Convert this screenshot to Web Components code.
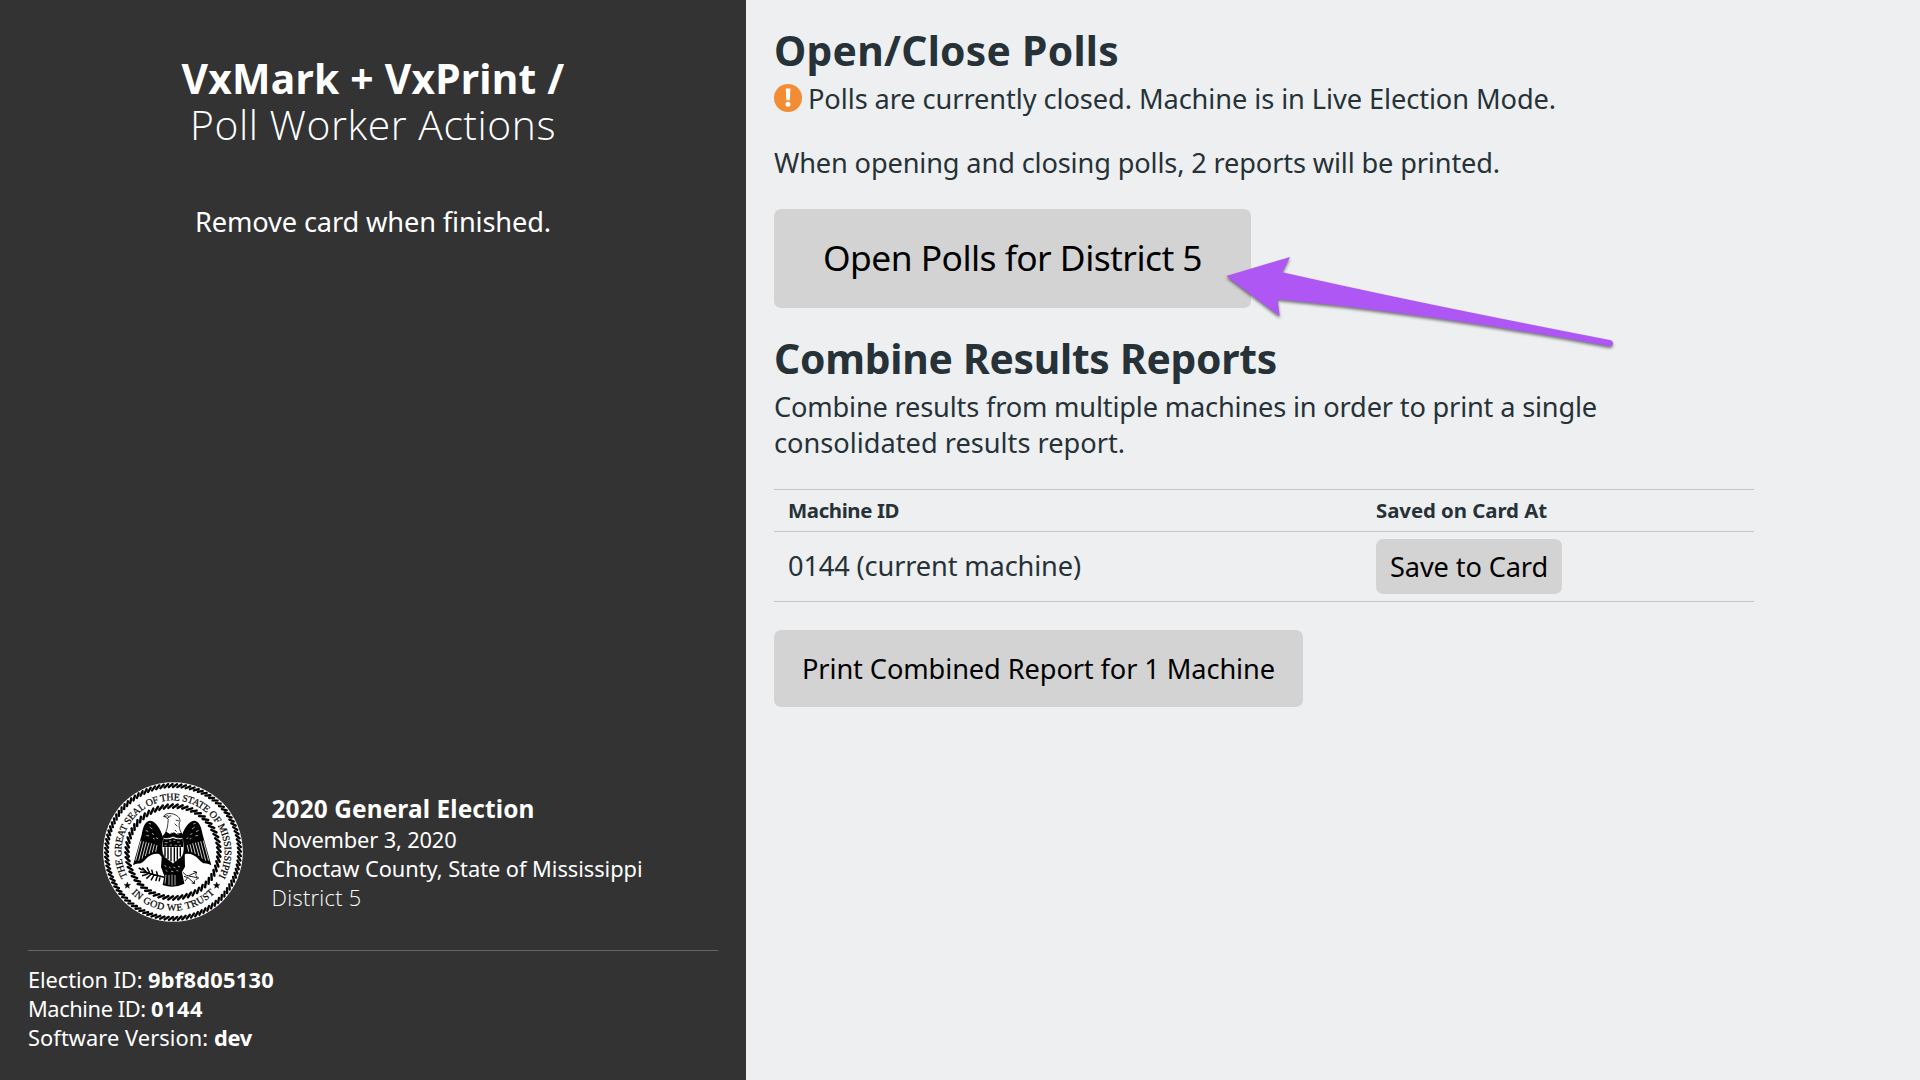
<!DOCTYPE html>
<html lang="en">
<head>
<meta charset="utf-8">
<title>VxMark + VxPrint</title>
<style>
html,body{margin:0;height:100%;overflow:hidden;background:#edeff0}
body{font-family:"Noto Sans","Open Sans",sans-serif;font-size:27.2px;line-height:36.4px;color:#263238}
</style>
</head>
<body>
<poll-worker-screen></poll-worker-screen>
<script>
const define=(name,html,after)=>customElements.define(name,class extends HTMLElement{
  constructor(){super();this.attachShadow({mode:'open'}).innerHTML=html;}
  connectedCallback(){if(after)after(this);}
});

/* One line of text tracked to a given advance width. */
define('fit-text',`<style>:host{display:inline-block;white-space:pre;vertical-align:baseline}</style><slot></slot>`,el=>{
  const target=parseFloat(el.getAttribute('w'));
  const natural=el.getBoundingClientRect().width;
  el.style.letterSpacing=((target-natural)/el.textContent.length)+'px';
});

define('vx-button',`<style>
:host{display:flex;box-sizing:border-box;width:max-content;align-items:center;justify-content:center;background:#d3d3d3;color:#000;border-radius:7px;height:77px;padding:1.4px 28px 0}
:host([size=large]){height:99px;width:477px;padding:0 0 2px;font-size:35.4px;line-height:47px}
:host([size=small]){height:55px;padding:1.4px 14px 0;border-radius:7px}
</style><slot></slot>`);

define('warning-icon',`<style>:host{display:block;width:28px;height:28px;flex:none}svg{display:block}</style>
<svg width="28" height="28" viewBox="0 0 28 28"><circle cx="14" cy="14" r="14" fill="#f28d35"/><path d="M11.8 4.6h4.6l-.6 11.7h-3.4z" fill="#fff"/><circle cx="14" cy="20.2" r="2.5" fill="#fff"/></svg>`);

const rope=(r1,r2,n,w,skew)=>{
  let d='';
  for(let i=0;i<n;i++){
    const a=i/n*2*Math.PI,b=a+skew;
    d+=`M${(250+r1*Math.cos(a)).toFixed(1)} ${(246+r1*Math.sin(a)).toFixed(1)}L${(250+r2*Math.cos(b)).toFixed(1)} ${(246+r2*Math.sin(b)).toFixed(1)}`;
  }
  return `<path d="${d}" stroke="#000" stroke-width="${w}" stroke-linecap="round"/>`;
};
const wing=`<path d="M221 206C214 178 199 153 182 152C166 152 160 172 156 194L130 286C148 276 153 286 166 270C180 254 194 250 208 252L228 272Z" fill="#000"/>
<path d="M154 212L138 272M162 214L147 272M170 216L157 266M178 218L167 258M186 220L178 252M194 223L188 247M202 225L198 245" stroke="#fff" stroke-width="2.4"/>
<path d="M168 181l8 4M180 171l8 6M170 196l8 2M187 190l6 4M199 203l6 3M177 160l7 2M190 205l5 2" stroke="#fff" stroke-width="2"/>`;
define('state-seal',`<style>:host{display:block;width:140px;height:140px;flex:none}svg{display:block}text{font-family:"Liberation Serif",serif;font-size:30px;fill:#000;stroke:#000;stroke-width:.7}</style>
<svg width="140" height="140" viewBox="40 36 420 420" fill="none">
<defs>
<path id="top" d="M250 401A155 155 0 0 1 250 91A155 155 0 0 1 250 401"/>
<path id="low" d="M74 246A176 176 0 0 0 426 246"/>
</defs>
<circle cx="250" cy="246" r="209.5" fill="#fff"/>
${rope(195,204,96,7,.06)}
${rope(133,143,60,7.4,.1)}
<text><textPath href="#top" startOffset="50%" text-anchor="middle" textLength="641">THE GREAT SEAL OF THE STATE OF MISSISSIPPI</textPath></text>
<text><textPath href="#low" startOffset="50%" text-anchor="middle" textLength="279">IN GOD WE TRUST</textPath></text>
<path d="M113 336l2.6 7 7.4.3-5.8 4.6 2 7.1-6.2-4-6.2 4 2-7.1-5.8-4.6 7.4-.3z" fill="#000" stroke="#000"/>
<path d="M381 336l2.6 7 7.4.3-5.8 4.6 2 7.1-6.2-4-6.2 4 2-7.1-5.8-4.6 7.4-.3z" fill="#000" stroke="#000"/>
${wing}
<g transform="translate(495 0) scale(-1 1)">${wing}</g>
<path d="M226 192C236 171 234 158 236 148C230 143 225 139 222 140C224 132 235 129 246 131C262 134 272 144 271 154C266 163 268 177 277 193L266 190L258 195L246 189L238 195Z" fill="#fff" stroke="#000" stroke-width="2.4"/>
<path d="M223 140l11-3 5 4-7 4M239 138h6M258 150l10 3M255 161l8 8M256 180l5 5" stroke="#000" stroke-width="2.4"/>
<path d="M216 201L230 185L242 193L253 187L264 194L275 188L285 202V250L286 290L277 306L284 341Q252 357 219 345L224 318L214 292L217 248Z" fill="#000"/>
<path d="M221 203Q235 207 250 199Q265 207 279 203C284 222 286 248 276 261Q264 270 250 281Q236 270 224 261C214 247 216 222 221 203Z" fill="#fff" stroke="#000" stroke-width="2"/>
<path d="M221 206Q235 211 250 204Q265 211 279 206L281 231H219Z" fill="#000"/>
<path d="M226 232V260M235 232V267M244 232V274M254 232V275M263 232V269M272 232V260" stroke="#000" stroke-width="4.2"/>
<path d="M225 218h9M238 213h7M251 211h6M262 216h8M225 226h6M240 225h7M255 226h7M268 226h6" stroke="#fff" stroke-width="1.8"/>
<path d="M224 286l6 4M238 290l5 4M251 291l6 3M265 289l6 2M228 301l5 3M244 303l7 2M260 301l6 2M229 314L226 341M238 315V345M247 314V347M256 315V346" stroke="#fff" stroke-width="2"/>
<path d="M147 294L177 310L224 322M151 306l20 2M157 317l19-5M170 326l15-14M184 331l9-16M198 333l5-14M158 293l12 13M172 292l8 17M186 299l3 12M208 334l3-12M200 304l4 12" stroke="#000" stroke-width="4.5"/>
<path d="M156 300l8 2M171 316l8-2M180 302l5 5" stroke="#fff" stroke-width="1.5"/>
<path d="M280 307Q290 320 297 317L319 307M297 318L322 323M293 321L313 339M311 304l10 2-3 9M318 317l9 7-9 5M314 331l1 10-9-2M283 319l11 4-8 10" stroke="#000" stroke-width="2.6"/>
</svg>`);

define('election-info',`<style>
:host{display:flex;box-sizing:border-box;width:100%;padding-right:1px;justify-content:center;align-items:center;gap:29px;font-size:21.8px;line-height:29.12px}
.t{display:flex;flex-direction:column;align-items:flex-start}
.name{font-size:24.4px;line-height:32.5px;font-weight:700;padding-top:1px;margin-bottom:-1px}
.light{font-family:"Open Sans","Noto Sans",sans-serif;font-weight:300}
</style><state-seal></state-seal>
<div class="t"><fit-text class="name" w="263">2020 General Election</fit-text><fit-text w="185">November 3, 2020</fit-text><fit-text w="371">Choctaw County, State of Mississippi</fit-text><fit-text class="light" w="90">District 5</fit-text></div>`);

define('machine-info',`<style>
:host{display:flex;flex-direction:column;box-sizing:border-box;border-top:1px solid #666;padding:13.6px 0 28px;font-size:21.8px;line-height:29.12px}
div{display:flex}b{font-weight:700}
</style>
<div><fit-text w="120">Election ID: </fit-text><b><fit-text w="126">9bf8d05130</fit-text></b></div>
<div><fit-text w="123">Machine ID: </fit-text><b><fit-text w="52">0144</fit-text></b></div>
<div><fit-text w="186">Software Version: </fit-text><b><fit-text w="38">dev</fit-text></b></div>`);

define('side-bar',`<style>
:host{display:flex;flex-direction:column;box-sizing:border-box;width:746px;height:100%;background:#333;color:#fff;padding:0 28px}
header{display:flex;flex-direction:column;align-items:center;padding-top:55px;font-size:40.8px;line-height:46.2px;flex:1}
.h{font-weight:700}
.l{font-family:"Open Sans","Noto Sans",sans-serif;font-weight:300}
.p{font-size:27.2px;line-height:36.4px;margin-top:57px}
election-info{margin-bottom:28px}
</style>
<header><fit-text class="h" w="383">VxMark + VxPrint /</fit-text><fit-text class="l" w="366">Poll Worker Actions</fit-text><fit-text class="p" w="356">Remove card when finished.</fit-text></header>
<election-info></election-info><machine-info></machine-info>`);

define('machine-table',`<style>
:host{display:block;width:980px}
.r{display:grid;grid-template-columns:588px 1fr;align-items:center;justify-items:start;box-sizing:border-box;padding:0 14px;border-bottom:1px solid #c3c6c8;height:70px}
.head{height:43px;border-top:1px solid #c3c6c8;font-size:20.4px;line-height:27px;font-weight:700}
</style>
<div class="r head"><fit-text w="111">Machine ID</fit-text><fit-text w="171">Saved on Card At</fit-text></div>
<div class="r"><fit-text w="293">0144 (current machine)</fit-text><vx-button size="small"><fit-text w="158">Save to Card</fit-text></vx-button></div>`);

define('callout-arrow',`<style>:host{position:absolute;left:1216px;top:247px;width:410px;height:110px;filter:drop-shadow(0 2px 1.5px rgba(0,0,0,.5))}svg{display:block}</style>
<svg width="410" height="110" viewBox="1216 247 410 110"><path d="M1226.3 276L1290 257L1282.4 272.3Q1420 303.5 1611 340.2Q1614 342 1612.5 345Q1611.5 346.4 1608.5 345.9Q1433 314 1277.6 299.2L1279.7 316.2Z" fill="#ae57f5"/></svg>`);

define('main-panel',`<style>
:host{display:flex;flex-direction:column;align-items:flex-start;flex:1;padding:27px 0 0 28px}
h1{display:flex;margin:0 0 7px;font-size:40.8px;line-height:46.2px;font-weight:700}
p{display:flex;flex-direction:column;align-items:flex-start;margin:0 0 28px}
.s{flex-direction:row;align-items:center;gap:6px}
.s fit-text{padding-top:1px;margin-bottom:-1px}
warning-icon{margin-top:-1px}
vx-button[size=large]{margin-bottom:26.6px}
.d{padding-top:1px;margin-bottom:27px}
machine-table{margin-bottom:28px}
</style>
<h1><fit-text w="345">Open/Close Polls</fit-text></h1>
<p class="s"><warning-icon></warning-icon><fit-text w="748">Polls are currently closed. Machine is in Live Election Mode.</fit-text></p>
<p><fit-text w="726">When opening and closing polls, 2 reports will be printed.</fit-text></p>
<vx-button size="large"><fit-text w="379">Open Polls for District 5</fit-text></vx-button>
<h1><fit-text w="503">Combine Results Reports</fit-text></h1>
<p class="d"><fit-text w="823">Combine results from multiple machines in order to print a single</fit-text><fit-text w="351">consolidated results report.</fit-text></p>
<machine-table></machine-table>
<vx-button><fit-text w="473">Print Combined Report for 1 Machine</fit-text></vx-button>`);

define('poll-worker-screen',`<style>:host{display:flex;width:1920px;height:1080px;position:relative}</style>
<side-bar></side-bar><main-panel></main-panel><callout-arrow></callout-arrow>`);
</script>
</body>
</html>
